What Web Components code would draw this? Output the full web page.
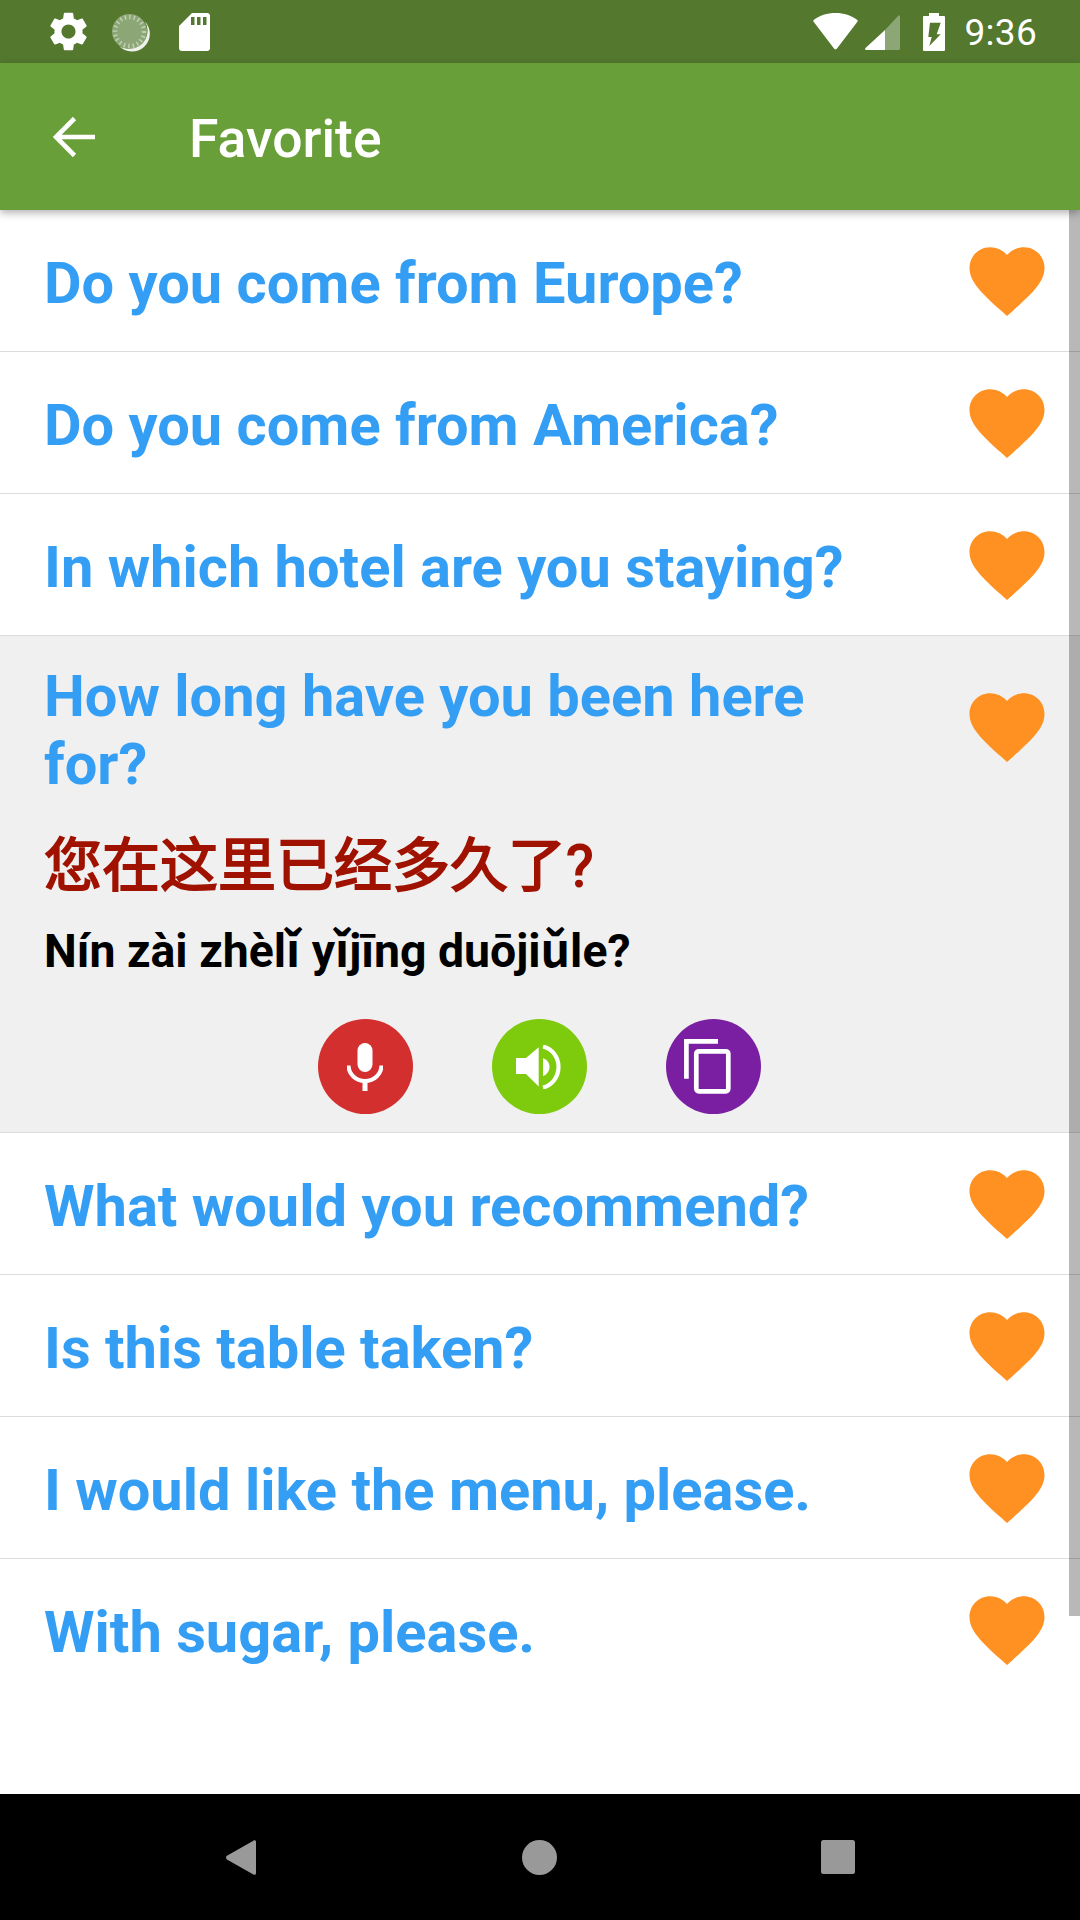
<!DOCTYPE html>
<html lang="en"><head><meta charset="utf-8">
<style>
html,body{margin:0;padding:0;background:#fff}
body{width:1080px;height:1920px;font-family:Roboto,"Noto Sans CJK SC",sans-serif;overflow:hidden}
app-shell{display:flex}
</style></head><body>
<app-shell>
<status-bar slot="status" time="9:36"></status-bar>
<app-toolbar slot="bar" title="Favorite"></app-toolbar>
<phrase-row phrase="Do you come from Europe?"></phrase-row>
<phrase-row phrase="Do you come from America?"></phrase-row>
<phrase-row phrase="In which hotel are you staying?"></phrase-row>
<phrase-row phrase="How long have you been here for?" open>
  <phrase-detail hanzi="您在这里已经多久了?" pinyin="Nín zài zhèlǐ yǐjīng duōjiǔle?"></phrase-detail>
</phrase-row>
<phrase-row phrase="What would you recommend?"></phrase-row>
<phrase-row phrase="Is this table taken?"></phrase-row>
<phrase-row phrase="I would like the menu, please."></phrase-row>
<phrase-row phrase="With sugar, please." last></phrase-row>
<nav-bar slot="nav"></nav-bar>
</app-shell>
<script>
function def(name,css,html){
  customElements.define(name,class extends HTMLElement{
    constructor(){super();this.attachShadow({mode:'open'});}
    connectedCallback(){
      const a=n=>this.getAttribute(n)||'';
      this.shadowRoot.innerHTML='<style>'+css+'</style>'+html(a,this);
    }
  });
}
def('app-shell',`
:host{display:flex;flex-direction:column;width:1080px;height:1920px;position:relative}
.list{flex:1;min-height:0;position:relative;overflow:hidden}
.thumb{position:absolute;right:0;top:0;width:11px;height:1406px;background:rgba(0,0,0,.28)}
`,()=>`<slot name="status"></slot><slot name="bar"></slot><div class="list"><slot></slot><div class="thumb"></div></div><slot name="nav"></slot>`);

def('status-bar',`
:host{display:flex;align-items:center;height:63px;background:#53782e;color:#fff;padding:0 43px 0 49px;box-sizing:border-box}
svg{display:block;flex:none}
.sp{flex:1}
.t{font:400 37px/1 Roboto,sans-serif;margin-left:19px;letter-spacing:.3px;padding-top:2px}
`,(a)=>`
<svg width="39" height="39" viewBox="2 2 20 20"><path fill="#fff" d="M19.14 12.94c.04-.3.06-.61.06-.94 0-.32-.02-.64-.07-.94l2.03-1.58c.18-.14.23-.41.12-.61l-1.92-3.32c-.12-.22-.37-.29-.59-.22l-2.39.96c-.5-.38-1.03-.7-1.62-.94l-.36-2.54c-.04-.24-.24-.41-.48-.41h-3.84c-.24 0-.43.17-.47.41l-.36 2.54c-.59.24-1.13.57-1.62.94l-2.39-.96c-.22-.08-.47 0-.59.22L2.74 8.87c-.12.21-.08.47.12.61l2.03 1.58c-.05.3-.09.63-.09.94s.02.64.07.94l-2.03 1.58c-.18.14-.23.41-.12.61l1.92 3.32c.12.22.37.29.59.22l2.39-.96c.5.38 1.03.7 1.62.94l.36 2.54c.05.24.24.41.48.41h3.84c.24 0 .44-.17.47-.41l.36-2.54c.59-.24 1.13-.56 1.62-.94l2.39.96c.22.08.47 0 .59-.22l1.92-3.32c.12-.22.07-.47-.12-.61l-2.01-1.58zM12 15.6c-1.98 0-3.6-1.62-3.6-3.6s1.62-3.6 3.6-3.6 3.6 1.62 3.6 3.6-1.62 3.6-3.6 3.6z"/></svg>
<svg width="40" height="40" viewBox="0 0 40 40" style="margin-left:22px">
<circle cx="19.500" cy="19.500" r="17.500" fill="#fff" opacity=".34"/>
<path d="M35 9.500A17.500 17.500 0 0 1 9 34A18.500 18.500 0 0 0 37.500 20A18 18 0 0 0 35 9.500Z" fill="#fff" opacity=".9"/>
<circle cx="19.500" cy="19.500" r="14.500" fill="none" stroke="#fff" stroke-opacity=".45" stroke-width="4.500" stroke-dasharray="1.500 3"/>
</svg>
<svg width="31" height="38" viewBox="0 0 31 38" style="margin-left:29px"><path fill="#fff" d="M13 0h15a3 3 0 0 1 3 3v32a3 3 0 0 1-3 3H3a3 3 0 0 1-3-3V13zM12 4v8h3.500V4zM18 4v8h3.500V4zM24 4v8h3.500V4z" fill-rule="evenodd"/></svg>
<span class="sp"></span>
<svg width="45" height="37" viewBox="0 0 45 37"><path fill="#fff" d="M22.500 0C14 0 6.500 2.500 1 6.800a1.500 1.500 0 0 0-.2 2.200L21 35.500a2 2 0 0 0 3 0L44.200 9a1.500 1.500 0 0 0-.2-2.200C38.500 2.500 31 0 22.500 0z"/></svg>
<svg width="35" height="35" viewBox="0 0 35 35" style="margin-left:7px;margin-top:2px"><path fill="#fff" d="M35 1.500V33.500a1.500 1.500 0 0 1-1.500 1.500H20V15L33 1c.9-.9 2-.5 2 .5z" opacity=".34"/><path fill="#fff" d="M20 15V35H1.500C.2 35-.4 34 .5 33z"/></svg>
<svg width="22" height="38" viewBox="0 0 22 38" style="margin-left:23px"><path fill="#fff" fill-rule="evenodd" d="M6 0h10v3h5a1 1 0 0 1 1 1v33a1 1 0 0 1-1 1H1a1 1 0 0 1-1-1V4a1 1 0 0 1 1-1h5zM7 9.700L5.300 24H8.700L6.300 33 17.700 21.300H13.700L17.700 9.700z"/></svg>
<span class="t">${a('time')}</span>`);

def('app-toolbar',`
:host{display:flex;align-items:center;height:147px;background:#689f38;color:#fff;padding-left:53px;box-sizing:border-box;box-shadow:0 3px 8px rgba(0,0,0,.3);position:relative;z-index:2}
svg{display:block;flex:none}
h1{margin:0 0 0 94px;font:500 53.500px/1 Roboto,sans-serif;padding-top:4px}
`,(a)=>`<svg width="42" height="42" viewBox="0 0 42 42"><path d="M42 21H3.500M21.500 2.500L3 21l18.500 18.500" fill="none" stroke="#fff" stroke-width="4.600"/></svg><h1>${a('title')}</h1>`);

const heart='M12 21.35l-1.45-1.32C5.4 15.36 2 12.28 2 8.5 2 5.42 4.42 3 7.5 3c1.74 0 3.41.81 4.5 2.09C13.09 3.81 14.76 3 16.5 3 19.58 3 22 5.42 22 8.5c0 3.78-3.4 6.86-8.55 11.54L12 21.35z';
def('phrase-row',`
:host{display:block;background:#fff;border-bottom:1px solid #dcdcdc;box-sizing:border-box}
:host([last]){border-bottom:0}
:host([open]){background:#f0f0f0}
.top{display:flex;align-items:center;min-height:141px;padding:4px 0 0 44px;box-sizing:border-box}
.top svg{margin-top:-4px}
:host([open]) .top{padding-top:26px;padding-bottom:30px;align-items:flex-start}
:host([open]) svg{margin-top:20px}
.p{flex:1;min-width:0;margin:0;font:700 57.800px/68px Roboto,"Noto Sans CJK SC",sans-serif;color:#339ef4;padding-right:80px}
svg{display:block;flex:none;margin-right:28px;width:90px;height:90px}
`,(a)=>`<div class="top"><p class="p">${a('phrase')}</p><svg viewBox="0 0 24 24"><path fill="#ff9122" d="${heart}"/></svg></div><slot></slot>`);

def('phrase-detail',`
:host{display:block;padding:0 0 18px 44px}
.h{font:400 58px/77px Roboto,"Noto Sans CJK SC",sans-serif;color:#a01200;-webkit-text-stroke:1.8px #a01200}
.y{font:700 46.400px/60px Roboto,"Noto Sans CJK SC",sans-serif;color:#000;margin-top:16px}
.acts{display:flex;justify-content:center;gap:79px;margin:38px 0 0 -46px}
.c{width:95px;height:95px;border-radius:50%;display:flex;align-items:center;justify-content:center}
svg{display:block}
`,(a)=>`<div class="h" lang="zh-CN">${a('hanzi')}</div><div class="y">${a('pinyin')}</div>
<div class="acts">
<div class="c" style="background:#d32f2f"><svg width="36" height="48" viewBox="0 0 36 48"><rect x="10.500" y="0" width="15" height="29" rx="7.500" fill="#fff"/><path d="M1.500 22.500a16.500 15.500 0 0 0 33 0" fill="none" stroke="#fff" stroke-width="4.200"/><rect x="15.500" y="37" width="5" height="11" fill="#fff"/></svg></div>
<div class="c" style="background:#7eca0d"><svg width="46" height="44" viewBox="0 0 46 44"><path fill="#fff" d="M0 13h10L22.700 2.300V41.500L10 29H0z"/><path fill="#fff" d="M27 13.300c3.800 1 6.500 4.500 6.500 8.700s-2.700 7.700-6.500 9z"/><path d="M27 1.500c8.500 2 15.500 10 15.500 20.500S35.500 40.500 27 42.500" fill="none" stroke="#fff" stroke-width="4.200"/></svg></div>
<div class="c" style="background:#7b1fa2"><svg width="47" height="55" viewBox="0 0 47 55" style="margin-right:12px"><path d="M34 2.400H2.400V39.700" fill="none" stroke="#fff" stroke-width="4.700"/><rect x="12.300" y="12.300" width="32" height="40" rx="2.500" fill="none" stroke="#fff" stroke-width="4.700"/></svg></div>
</div>`);

def('nav-bar',`
:host{display:flex;height:126px;background:#000;align-items:center;flex:none;padding-left:226px;box-sizing:border-box}
svg{display:block;flex:none}
`,()=>`
<svg width="30" height="37" viewBox="0 0 32 37"><path fill="#999" d="M32 2v33c0 2-1.500 2.500-2.800 1.500L1 20.500c-1.300-1-1.300-3 0-4L29.200.5C30.500-.5 32 0 32 2z"/></svg>
<svg width="35" height="35" viewBox="0 0 36 36" style="margin-left:266px"><circle cx="18" cy="18" r="18" fill="#999"/></svg>
<svg width="34" height="34" viewBox="0 0 34 34" style="margin-left:264px"><rect width="34" height="34" rx="2.500" fill="#999"/></svg>`);
</script>
</body></html>
